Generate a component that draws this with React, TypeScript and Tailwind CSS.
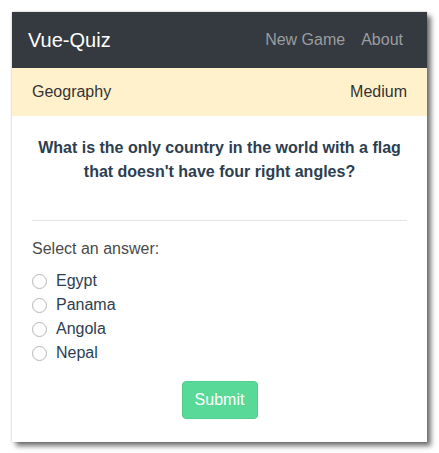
import React, { useState } from "react";

const answers = ["Egypt", "Panama", "Angola", "Nepal"];

export default function App() {
  const [picked, setPicked] = useState<string | null>(null);

  return (
    <div className="min-h-screen bg-white pt-[12px] pl-[12px] font-['Liberation_Sans',Arial,sans-serif]">
      <div className="w-[415px] h-[430px] bg-white flex flex-col shadow-[0_0_2px_rgba(0,0,0,0.25),4px_4px_5px_rgba(0,0,0,0.55)]">
        {/* navbar */}
        <nav className="h-[56px] bg-[#343a40] flex items-center justify-between pl-[16px] pr-[16px]">
          <span className="text-white text-[20px] leading-[30px]">Vue-Quiz</span>
          <div className="flex text-[16px] leading-[24px] text-[#9b9d9f]">
            <span className="px-[8px]">New Game</span>
            <span className="px-[8px]">About</span>
          </div>
        </nav>

        {/* category bar */}
        <div className="h-[48px] bg-[#fff1cb] flex items-center justify-between px-[20px] text-[16px] text-[#333]">
          <span>Geography</span>
          <span>Medium</span>
        </div>

        <div className="px-[20px] flex flex-col">
          <p className="mt-[20px] text-center font-bold text-[16px] leading-[24px] text-[#2c3e50] px-[4px]">
            What is the only country in the world with a flag that doesn't have four right angles?
          </p>
          <hr className="mt-[36px] border-0 border-t border-[#e3e3e3]" />
          <div className="mt-[16px] text-[16px] leading-[24px] text-[#4a4a4a]">Select an answer:</div>
          <div className="mt-[8px] flex flex-col">
            {answers.map((a) => (
              <label key={a} className="h-[24px] flex items-center text-[16px] text-[#2c3e50] cursor-pointer" onClick={() => setPicked(a)}>
                <span className="w-[15px] h-[15px] rounded-full border border-[#b5b5b5] bg-white mr-[9px] flex items-center justify-center">
                  {picked === a && <span className="w-[7px] h-[7px] rounded-full bg-[#2c3e50]" />}
                </span>
                {a}
              </label>
            ))}
          </div>
          <div className="mt-[16px] flex justify-center">
            <button className="w-[76px] h-[38px] rounded-[4px] bg-[#58d997] border border-[#4fcf8c] text-white text-[16px]">
              Submit
            </button>
          </div>
        </div>
      </div>
    </div>
  );
}
